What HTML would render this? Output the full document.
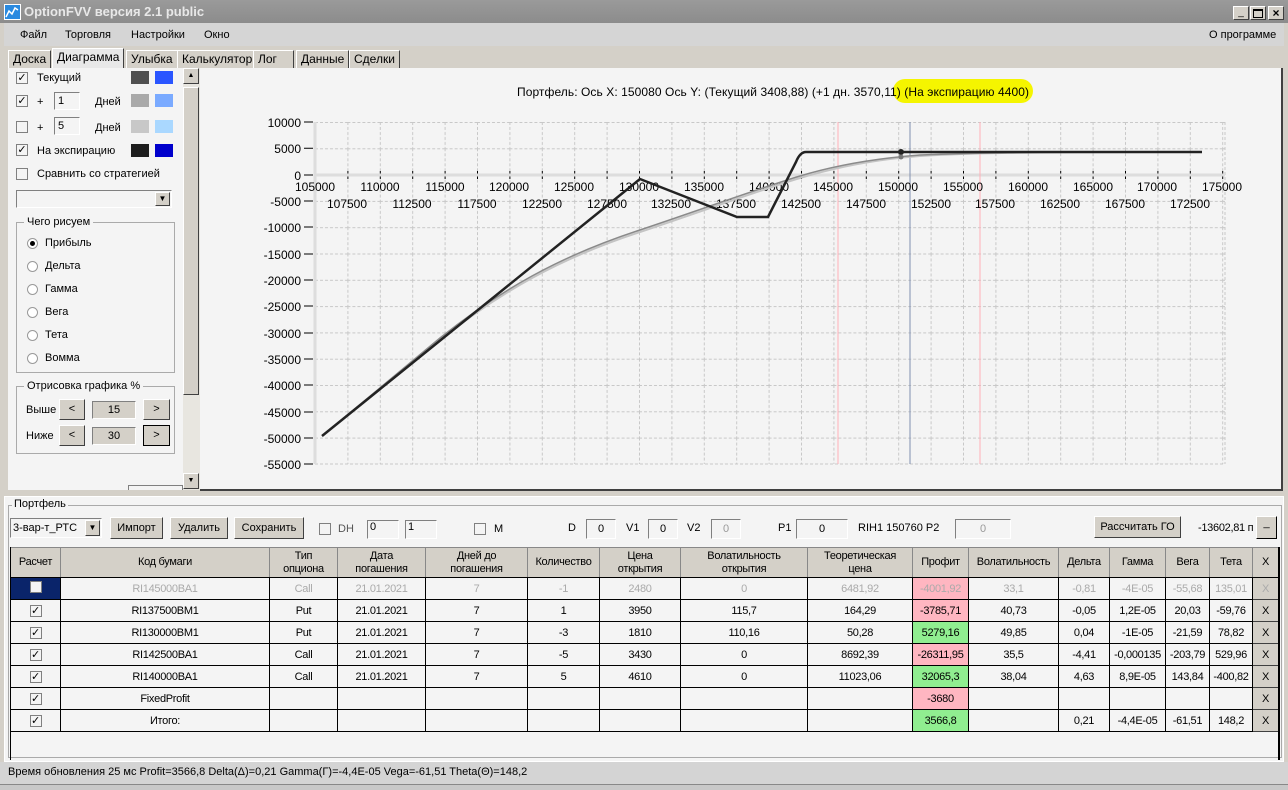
<!DOCTYPE html>
<html><head><meta charset="utf-8"><style>
*{box-sizing:border-box;margin:0;padding:0}
body{width:1288px;height:790px;overflow:hidden;background:#d4d0c8;font-family:"Liberation Sans",sans-serif;font-size:11px;color:#000;position:relative}
.a{position:absolute}
.title{left:0;top:0;width:1288px;height:23px;background:linear-gradient(#9a9a9a,#8c8c8c);color:#e8e8e8;font-weight:bold;font-size:13px;line-height:23px;padding-left:24px}
.menu{left:4px;top:23px;width:1280px;height:23px;background:#d5d5d5;line-height:24px}
.menu span{position:absolute;top:0}
.tab{top:50px;height:18px;border:1px solid #fff;border-right-color:#404040;border-bottom:none;background:#d4d0c8;line-height:17px;padding:0 4px;font-size:12px}
.panel{left:8px;top:68px;width:175px;height:422px;background:#f4f4f4}
.cb{width:12px;height:12px;border:1px solid #808080;background:#f4f4f4;font-size:11px;line-height:10px;text-align:center}
.sw{width:18px;height:13px}
.gb{border:1px solid #aaa}
.btn{background:#d4d0c8;border:1px solid;border-color:#fff #404040 #404040 #fff;text-align:center}
.in{border:1px solid;border-color:#808080 #fff #fff #808080;background:#f4f4f4}
.rad{width:11px;height:11px;border-radius:50%;border:1px solid #999;background:#fff}
.narrow{font-family:"Liberation Sans Narrow","Liberation Sans",sans-serif}
table{border-collapse:collapse;font-family:"Liberation Sans Narrow","Liberation Sans",sans-serif;font-size:11px;table-layout:fixed}
td{border:1px solid #000;text-align:center;height:22px;padding:0;background:#f4f4f4;white-space:nowrap;overflow:hidden;letter-spacing:-0.3px}
th{border:1px solid #888;background:#d4d0c8;font-weight:normal;height:30px;line-height:13px;border-bottom:1px solid #000;letter-spacing:-0.3px}
.g td{color:#aaa}
.r{background:#ffb6c1!important}.gr{background:#90ee90!important}
.x{background:#d4d0c8!important;border:1px solid;border-color:#fff #404040 #404040 #fff}
</style></head><body>
<div class="a title">OptionFVV версия 2.1 public</div>
<div class="a" style="left:4px;top:4px;width:17px;height:16px;background:#2a8ae0;border:1px solid #fff"><svg width="15" height="14"><polyline points="1,12 4,6 7,9 10,3 13,5" fill="none" stroke="#fff" stroke-width="1.5"/></svg></div>
<div class="a btn" style="left:1233px;top:6px;width:16px;height:14px;font-size:10px;line-height:12px">_</div>
<div class="a btn" style="left:1250px;top:6px;width:16px;height:14px"><div style="margin:2px auto;width:10px;height:9px;border:1px solid #000;border-top-width:2px"></div></div>
<div class="a btn" style="left:1268px;top:6px;width:16px;height:14px;font-size:12px;line-height:12px;font-weight:bold">×</div>
<div class="a menu"><span style="left:16px">Файл</span><span style="left:61px">Торговля</span><span style="left:127px">Настройки</span><span style="left:200px">Окно</span><span style="left:1205px">О программе</span></div>
<div class="a tab" style="left:8px">Доска</div>
<div class="a tab" style="left:52px;top:48px;height:20px;background:#e8e8e8">Диаграмма</div>
<div class="a tab" style="left:126px">Улыбка</div>
<div class="a tab" style="left:177px">Калькулятор</div>
<div class="a tab" style="left:253px;width:41px">Лог</div>
<div class="a tab" style="left:296px">Данные</div>
<div class="a tab" style="left:349px">Сделки</div>

<div class="a panel">
 <div class="a cb" style="left:8px;top:4px">✓</div><div class="a" style="left:29px;top:4px">Текущий</div>
 <div class="a sw" style="left:123px;top:3px;background:#505050"></div><div class="a sw" style="left:147px;top:3px;background:#2a55ff"></div>
 <div class="a cb" style="left:8px;top:27px">✓</div><div class="a" style="left:29px;top:28px">+</div>
 <div class="a in" style="left:46px;top:24px;width:26px;height:18px;padding-left:3px;line-height:16px">1</div><div class="a" style="left:87px;top:28px">Дней</div>
 <div class="a sw" style="left:123px;top:26px;background:#a9a9a9"></div><div class="a sw" style="left:147px;top:26px;background:#7aaaff"></div>
 <div class="a cb" style="left:8px;top:53px"></div><div class="a" style="left:29px;top:54px">+</div>
 <div class="a in" style="left:46px;top:49px;width:26px;height:18px;padding-left:3px;line-height:16px">5</div><div class="a" style="left:87px;top:54px">Дней</div>
 <div class="a sw" style="left:123px;top:52px;background:#c8c8c8"></div><div class="a sw" style="left:147px;top:52px;background:#aad8ff"></div>
 <div class="a cb" style="left:8px;top:76px">✓</div><div class="a" style="left:29px;top:77px">На экспирацию</div>
 <div class="a sw" style="left:123px;top:76px;background:#1e1e1e"></div><div class="a sw" style="left:147px;top:76px;background:#0000cc"></div>
 <div class="a cb" style="left:8px;top:100px"></div><div class="a" style="left:29px;top:100px">Сравнить со стратегией</div>
 <div class="a in" style="left:8px;top:122px;width:156px;height:18px"><div class="a btn" style="right:1px;top:1px;width:15px;height:14px;font-size:8px;line-height:12px">▼</div></div>
 <div class="a gb" style="left:8px;top:154px;width:159px;height:151px"></div>
 <div class="a" style="left:16px;top:148px;background:#f4f4f4;padding:0 3px">Чего рисуем</div>
 <div class="a rad" style="left:19px;top:170px"><div style="width:5px;height:5px;background:#000;border-radius:50%;margin:2px"></div></div><div class="a" style="left:37px;top:169px">Прибыль</div>
 <div class="a rad" style="left:19px;top:193px"></div><div class="a" style="left:37px;top:192px">Дельта</div>
 <div class="a rad" style="left:19px;top:216px"></div><div class="a" style="left:37px;top:215px">Гамма</div>
 <div class="a rad" style="left:19px;top:239px"></div><div class="a" style="left:37px;top:238px">Вега</div>
 <div class="a rad" style="left:19px;top:262px"></div><div class="a" style="left:37px;top:261px">Тета</div>
 <div class="a rad" style="left:19px;top:285px"></div><div class="a" style="left:37px;top:284px">Вомма</div>
 <div class="a gb" style="left:8px;top:318px;width:159px;height:68px"></div>
 <div class="a" style="left:16px;top:312px;background:#f4f4f4;padding:0 3px">Отрисовка графика %</div>
 <div class="a" style="left:18px;top:336px">Выше</div>
 <div class="a btn" style="left:51px;top:331px;width:26px;height:21px;line-height:19px">&lt;</div>
 <div class="a in" style="left:84px;top:333px;width:44px;height:18px;background:#d4d0c8;text-align:center;line-height:16px">15</div>
 <div class="a btn" style="left:135px;top:331px;width:27px;height:21px;line-height:19px">&gt;</div>
 <div class="a" style="left:18px;top:362px">Ниже</div>
 <div class="a btn" style="left:51px;top:357px;width:26px;height:21px;line-height:19px">&lt;</div>
 <div class="a in" style="left:84px;top:359px;width:44px;height:18px;background:#d4d0c8;text-align:center;line-height:16px">30</div>
 <div class="a btn" style="left:135px;top:357px;width:27px;height:21px;line-height:19px;border:1px solid #000">&gt;</div>
 <div class="a" style="left:120px;top:417px;width:55px;height:5px;border:1px solid #808080;border-bottom:none"></div>
</div>
<div class="a" style="left:183px;top:68px;width:17px;height:422px;background:#e8e6e0"></div>
<div class="a btn" style="left:183px;top:68px;width:16px;height:16px;font-size:7px;line-height:14px">▲</div>
<div class="a btn" style="left:183px;top:87px;width:16px;height:308px"></div>
<div class="a btn" style="left:183px;top:473px;width:16px;height:16px;font-size:7px;line-height:14px">▼</div>

<div class="a" style="left:200px;top:68px;width:1083px;height:423px;background:#f4f4f4;border-right:2px solid #404040;border-bottom:2px solid #404040"></div>
<svg class="a" style="left:0;top:0" width="1288" height="490" font-family="Liberation Sans, sans-serif" font-size="12">
<defs><pattern id="gp" x="315" y="122" width="32.4" height="26.3" patternUnits="userSpaceOnUse"><path d="M0.5 0V26.3M0 0.5H32.4" stroke="#c8c8c8" stroke-dasharray="3,2" fill="none"/></pattern>
<pattern id="tk" x="315" y="171" width="32.4" height="8" patternUnits="userSpaceOnUse"><path d="M0.5 0V8" stroke="#000"/></pattern></defs>
<rect x="315" y="122" width="910" height="342" fill="url(#gp)"/>
<path d="M1225 122V464" stroke="#c8c8c8" stroke-dasharray="3,2"/>
<path d="M315 464H1225" stroke="#c8c8c8" stroke-dasharray="3,2"/>
<rect x="315" y="171" width="911" height="8" fill="url(#tk)"/>
<path d="M315 175H1225" stroke="#ddd" stroke-width="3"/>
<path d="M315 122V464" stroke="#ddd" stroke-width="3"/>
<path d="M838 122V464M980 122V464" stroke="#ffb0b8"/>
<path d="M910 122V464" stroke="#8090b0"/>
<g fill="#000" text-anchor="end">
<text x="301" y="127">10000</text><text x="301" y="153">5000</text><text x="301" y="180">0</text><text x="301" y="206">-5000</text><text x="301" y="232">-10000</text><text x="301" y="259">-15000</text><text x="301" y="285">-20000</text><text x="301" y="311">-25000</text><text x="301" y="338">-30000</text><text x="301" y="364">-35000</text><text x="301" y="390">-40000</text><text x="301" y="417">-45000</text><text x="301" y="443">-50000</text><text x="301" y="469">-55000</text>
</g>
<g stroke="#000"><path d="M304 122H313M304 148.3H313M304 175H313M304 201H313M304 227H313M304 254H313M304 280H313M304 306H313M304 333H313M304 359H313M304 385H313M304 412H313M304 438H313M304 464H313"/></g>
<g text-anchor="middle" fill="#000">
<text x="315" y="191">105000</text><text x="380" y="191">110000</text><text x="445" y="191">115000</text><text x="509" y="191">120000</text><text x="574" y="191">125000</text><text x="639" y="191">130000</text><text x="704" y="191">135000</text><text x="769" y="191">140000</text><text x="833" y="191">145000</text><text x="898" y="191">150000</text><text x="963" y="191">155000</text><text x="1028" y="191">160000</text><text x="1093" y="191">165000</text><text x="1157" y="191">170000</text><text x="1222" y="191">175000</text>
<text x="347" y="208">107500</text><text x="412" y="208">112500</text><text x="477" y="208">117500</text><text x="542" y="208">122500</text><text x="607" y="208">127500</text><text x="671" y="208">132500</text><text x="736" y="208">137500</text><text x="801" y="208">142500</text><text x="866" y="208">147500</text><text x="931" y="208">152500</text><text x="995" y="208">157500</text><text x="1060" y="208">162500</text><text x="1125" y="208">167500</text><text x="1190" y="208">172500</text>
</g>
<path d="M322 436L440 340C500 292 560 258 640 232C700 212 760 190 800 178C840 166 880 159 920 156C970 153 1010 152 1202 152" fill="none" stroke="#c4c4c4" stroke-width="2"/>
<path d="M322 436L440 338C500 290 560 256 640 230C700 210 760 188 800 176C840 164 880 158 920 155C970 153 1010 152 1202 152" fill="none" stroke="#8a8a8a" stroke-width="1.5"/>
<path d="M322 436L640 179L737 217L768 217L796 162Q800 152 806 152L1202 152" fill="none" stroke="#222" stroke-width="2.5"/>
<circle cx="901" cy="152" r="3" fill="#222"/><circle cx="901" cy="157" r="2.5" fill="#777"/>
<rect x="893" y="79" width="140" height="24" rx="12" fill="#f5f500"/>
<text x="517" y="96" font-size="12" textLength="512" lengthAdjust="spacing">Портфель:  Ось X:  150080  Ось Y:   (Текущий 3408,88)   (+1 дн. 3570,11)   (На экспирацию 4400)</text>
</svg>

<div class="a" style="left:4px;top:496px;width:1280px;height:266px;background:#f4f4f4;border:1px solid #fff"></div>
<div class="a" style="left:8px;top:505px;width:1274px;height:253px;border:1px solid #aaa"></div>
<div class="a narrow" style="left:12px;top:498px;background:#f4f4f4;padding:0 2px">Портфель</div>
<div class="a in narrow" style="left:10px;top:518px;width:92px;height:20px;line-height:18px;padding-left:2px;font-size:11px">3-вар-т_РТС<div class="a btn" style="right:1px;top:1px;width:15px;height:16px;font-size:8px;line-height:14px">▼</div></div>
<div class="a btn narrow" style="left:110px;top:517px;width:53px;height:22px;line-height:20px;font-size:11px">Импорт</div>
<div class="a btn narrow" style="left:170px;top:517px;width:58px;height:22px;line-height:20px;font-size:11px">Удалить</div>
<div class="a btn narrow" style="left:234px;top:517px;width:70px;height:22px;line-height:20px;font-size:11px">Сохранить</div>
<div class="a cb" style="left:319px;top:523px"></div><div class="a narrow" style="left:338px;top:523px;color:#555;font-size:11px">DH</div>
<div class="a in" style="left:367px;top:520px;width:32px;height:19px;padding-left:2px">0</div>
<div class="a in" style="left:405px;top:520px;width:32px;height:19px;padding-left:2px">1</div>
<div class="a cb" style="left:474px;top:523px"></div><div class="a narrow" style="left:494px;top:523px;font-size:11px">M</div>
<div class="a narrow" style="left:568px;top:522px;font-size:11px">D</div><div class="a in" style="left:586px;top:519px;width:30px;height:20px;text-align:center;line-height:18px">0</div>
<div class="a narrow" style="left:626px;top:522px;font-size:11px">V1</div><div class="a in" style="left:648px;top:519px;width:30px;height:20px;text-align:center;line-height:18px">0</div>
<div class="a narrow" style="left:687px;top:522px;font-size:11px">V2</div><div class="a in" style="left:711px;top:519px;width:30px;height:20px;text-align:center;line-height:18px;color:#999">0</div>
<div class="a narrow" style="left:778px;top:522px;font-size:11px">P1</div><div class="a in" style="left:796px;top:519px;width:52px;height:20px;text-align:center;line-height:18px">0</div>
<div class="a narrow" style="left:858px;top:522px;font-size:11px">RIH1 150760  P2</div><div class="a in" style="left:955px;top:519px;width:56px;height:20px;text-align:center;line-height:18px;color:#999">0</div>
<div class="a btn narrow" style="left:1094px;top:516px;width:87px;height:22px;line-height:20px;font-size:11px">Рассчитать ГО</div>
<div class="a narrow" style="left:1198px;top:522px;font-size:11px;letter-spacing:-0.3px">-13602,81 п</div>
<div class="a btn" style="left:1256px;top:516px;width:21px;height:23px;border-color:#fff #000 #000 #fff">_</div>

<table class="a" style="left:10px;top:547px;width:1268px">
<colgroup><col style="width:50px"><col style="width:209px"><col style="width:68px"><col style="width:88px"><col style="width:102px"><col style="width:72px"><col style="width:81px"><col style="width:127px"><col style="width:105px"><col style="width:56px"><col style="width:90px"><col style="width:51px"><col style="width:56px"><col style="width:44px"><col style="width:43px"><col style="width:26px"></colgroup>
<tr><th>Расчет</th><th>Код бумаги</th><th>Тип<br>опциона</th><th>Дата<br>погашения</th><th>Дней до<br>погашения</th><th>Количество</th><th>Цена<br>открытия</th><th>Волатильность<br>открытия</th><th>Теоретическая<br>цена</th><th>Профит</th><th>Волатильность</th><th>Дельта</th><th>Гамма</th><th>Вега</th><th>Тета</th><th>X</th></tr>
<tr class="g"><td style="background:#0a246a"><span class="cb" style="display:inline-block"></span></td><td>RI145000BA1</td><td>Call</td><td>21.01.2021</td><td>7</td><td>-1</td><td>2480</td><td>0</td><td>6481,92</td><td class="r">-4001,92</td><td>33,1</td><td>-0,81</td><td>-4E-05</td><td>-55,68</td><td>135,01</td><td class="x">X</td></tr>
<tr><td><span class="cb" style="display:inline-block">✓</span></td><td>RI137500BM1</td><td>Put</td><td>21.01.2021</td><td>7</td><td>1</td><td>3950</td><td>115,7</td><td>164,29</td><td class="r">-3785,71</td><td>40,73</td><td>-0,05</td><td>1,2E-05</td><td>20,03</td><td>-59,76</td><td class="x">X</td></tr>
<tr><td><span class="cb" style="display:inline-block">✓</span></td><td>RI130000BM1</td><td>Put</td><td>21.01.2021</td><td>7</td><td>-3</td><td>1810</td><td>110,16</td><td>50,28</td><td class="gr">5279,16</td><td>49,85</td><td>0,04</td><td>-1E-05</td><td>-21,59</td><td>78,82</td><td class="x">X</td></tr>
<tr><td><span class="cb" style="display:inline-block">✓</span></td><td>RI142500BA1</td><td>Call</td><td>21.01.2021</td><td>7</td><td>-5</td><td>3430</td><td>0</td><td>8692,39</td><td class="r">-26311,95</td><td>35,5</td><td>-4,41</td><td>-0,000135</td><td>-203,79</td><td>529,96</td><td class="x">X</td></tr>
<tr><td><span class="cb" style="display:inline-block">✓</span></td><td>RI140000BA1</td><td>Call</td><td>21.01.2021</td><td>7</td><td>5</td><td>4610</td><td>0</td><td>11023,06</td><td class="gr">32065,3</td><td>38,04</td><td>4,63</td><td>8,9E-05</td><td>143,84</td><td>-400,82</td><td class="x">X</td></tr>
<tr><td><span class="cb" style="display:inline-block">✓</span></td><td>FixedProfit</td><td></td><td></td><td></td><td></td><td></td><td></td><td></td><td class="r">-3680</td><td></td><td></td><td></td><td></td><td></td><td class="x">X</td></tr>
<tr><td><span class="cb" style="display:inline-block">✓</span></td><td>Итого:</td><td></td><td></td><td></td><td></td><td></td><td></td><td></td><td class="gr">3566,8</td><td></td><td>0,21</td><td>-4,4E-05</td><td>-61,51</td><td>148,2</td><td class="x">X</td></tr>
</table>
<div class="a" style="left:1278px;top:547px;width:2px;height:213px;background:#000"></div>
<div class="a" style="left:10px;top:547px;width:1px;height:213px;background:#000"></div>
<div class="a" style="left:0;top:762px;width:1288px;height:22px;background:#d4d4d4"></div>
<div class="a narrow" style="left:8px;top:766px;font-size:11px">Время обновления 25 мс  Profit=3566,8 Delta(Δ)=0,21 Gamma(Γ)=-4,4E-05 Vega=-61,51 Theta(Θ)=148,2</div>
<div class="a" style="left:0;top:784px;width:1288px;height:6px;background:#c8c8c8;border-top:1px solid #888"></div>
</body></html>
